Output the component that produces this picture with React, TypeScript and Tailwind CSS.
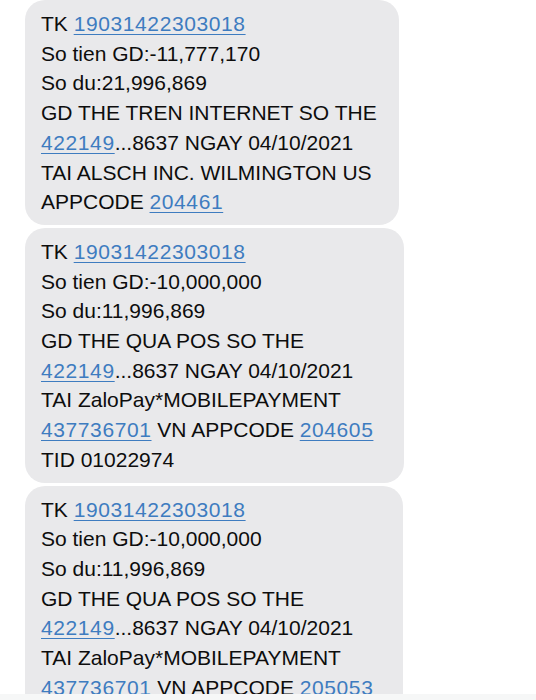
const ACCOUNT = '19031422303018'

type Part = string | { link: string }
type Message = { width: string; lines: Part[][] }

const messages: Message[] = [
  {
    width: 'w-[374px]',
    lines: [
      ['TK ', { link: ACCOUNT }],
      ['So tien GD:-11,777,170'],
      ['So du:21,996,869'],
      ['GD THE TREN INTERNET SO THE'],
      [{ link: '422149' }, '...8637 NGAY 04/10/2021'],
      ['TAI ALSCH INC. WILMINGTON US'],
      ['APPCODE ', { link: '204461' }],
    ],
  },
  {
    width: 'w-[379px]',
    lines: [
      ['TK ', { link: ACCOUNT }],
      ['So tien GD:-10,000,000'],
      ['So du:11,996,869'],
      ['GD THE QUA POS SO THE'],
      [{ link: '422149' }, '...8637 NGAY 04/10/2021'],
      ['TAI ZaloPay*MOBILEPAYMENT'],
      [{ link: '437736701' }, ' VN APPCODE ', { link: '204605' }],
      ['TID 01022974'],
    ],
  },
  {
    width: 'w-[378px]',
    lines: [
      ['TK ', { link: ACCOUNT }],
      ['So tien GD:-10,000,000'],
      ['So du:11,996,869'],
      ['GD THE QUA POS SO THE'],
      [{ link: '422149' }, '...8637 NGAY 04/10/2021'],
      ['TAI ZaloPay*MOBILEPAYMENT'],
      [{ link: '437736701' }, ' VN APPCODE ', { link: '205053' }],
      ['TID 01022974'],
    ],
  },
]

export default function App() {
  return (
    <div className="relative h-[700px] w-[536px] overflow-hidden bg-white font-['Liberation_Sans',Arial,sans-serif]">
      <div className="flex flex-col gap-[3px] pl-[25px]">
        {messages.map((msg, i) => (
          <Bubble key={i} msg={msg} />
        ))}
      </div>

      {/* bottom bar peeking in */}
      <div className="absolute bottom-0 left-0 h-[6px] w-full bg-[#f6f7f7]" />
    </div>
  )
}

function Bubble({ msg }: { msg: Message }) {
  return (
    <div className={`${msg.width} rounded-[20px] bg-[#e9e9eb] pt-[9px] pb-[8px] pl-[16px] text-[21px] leading-[29.7px] text-[#0d0d0d]`}>
      {msg.lines.map((line, j) => (
        <div key={j} className="whitespace-nowrap">
          {line.map((part, k) =>
            typeof part === 'string' ? (
              <span key={k}>{part}</span>
            ) : (
              <span
                key={k}
                className="tracking-[0.6px] text-[#3e7cc0] underline decoration-[1px] underline-offset-[3px]"
              >
                {part.link}
              </span>
            )
          )}
        </div>
      ))}
    </div>
  )
}
